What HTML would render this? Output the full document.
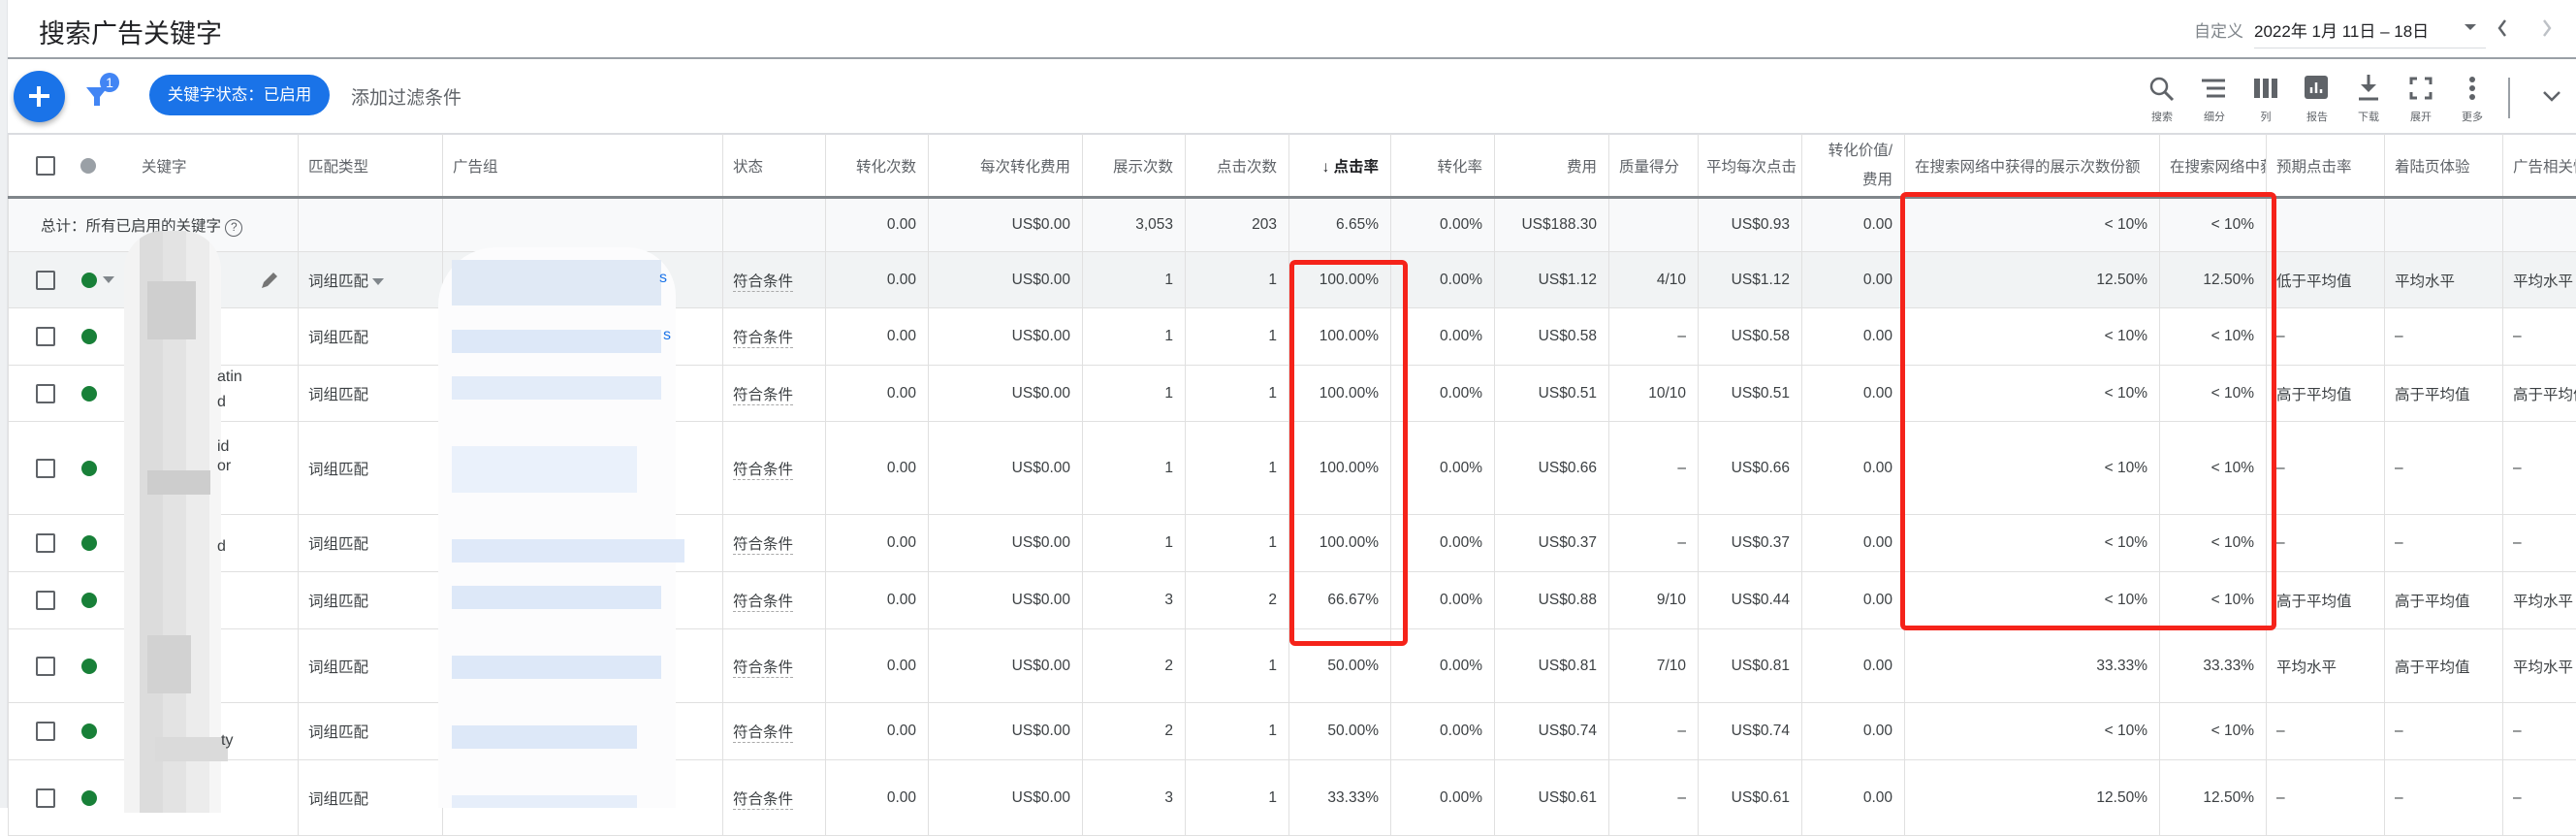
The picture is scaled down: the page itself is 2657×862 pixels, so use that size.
<!DOCTYPE html>
<html><head><meta charset="utf-8"><style>
*{box-sizing:border-box;margin:0;padding:0}
body{width:2657px;height:833px;overflow:hidden;background:#fff;font-family:"Liberation Sans","Noto Sans CJK SC",sans-serif;color:#3c4043;position:relative}
.abs{position:absolute}
#strip{left:0;top:0;width:8px;height:833px;background:#eef0f2;border-right:1px solid #e3e5e8}
#top{left:8px;top:0;width:2649px;height:61px;border-bottom:2px solid #9aa0a6;background:#fff}
table{position:absolute;left:8px;top:138px;border-collapse:collapse;table-layout:fixed;width:2649px}
td,th{border:1px solid #e0e0e0;white-space:nowrap;overflow:hidden;font-weight:normal;font-size:15.5px;padding:0 12px;text-align:right;vertical-align:middle}
th{color:#5f6368;height:65px;font-size:15.5px;border-top:1px solid #dadce0}
thead tr{border-bottom:3px solid #80868b}
td.l,th.l{text-align:left;padding-left:10px}
tr.tot td{background:#f8f9fa}
tr.hov td{background:#f1f3f4}
.st{border-bottom:1px dashed #aaa;padding-bottom:1px}
.red{position:absolute;border:5px solid #f5231a;border-radius:6px}
.cb{display:inline-block;width:20px;height:20px;border:2px solid #5f6368;border-radius:2px;vertical-align:middle}
.dot{display:inline-block;width:16px;height:16px;border-radius:50%;background:#188038;vertical-align:middle}
.tb{position:absolute;text-align:center;color:#5f6368;font-size:11px;width:40px}
</style></head><body>
<div class="abs" id="strip"></div>
<div class="abs" id="top"></div>
<div class="abs" style="left:40px;top:13px;font-size:27px;color:#202124">搜索广告关键字</div>
<div class="abs" style="left:2263px;top:18px;font-size:17px;color:#80868b">自定义</div>
<div class="abs" style="left:2325px;top:18px;font-size:17px;color:#202124">2022年 1月 11日 – 18日</div>
<div class="abs" style="left:2325px;top:49px;width:239px;height:1px;background:#dadce0"></div>
<div class="abs" style="left:2542px;top:25px;border-left:6px solid transparent;border-right:6px solid transparent;border-top:6px solid #5f6368"></div>
<svg class="abs" style="left:2574px;top:18px" width="14" height="22"><path d="M10 3 L4 11 L10 19" stroke="#5f6368" stroke-width="2.4" fill="none"/></svg>
<svg class="abs" style="left:2620px;top:18px" width="14" height="22"><path d="M4 3 L10 11 L4 19" stroke="#bdc1c6" stroke-width="2.4" fill="none"/></svg>

<div class="abs" style="left:14px;top:73px;width:53px;height:53px;border-radius:50%;background:#1a73e8;box-shadow:0 3px 6px rgba(0,0,0,.3)"></div>
<div class="abs" style="left:30px;top:97px;width:21px;height:4px;background:#fff"></div>
<div class="abs" style="left:38px;top:89px;width:4px;height:21px;background:#fff"></div>
<svg class="abs" style="left:86px;top:74px" width="40" height="40"><path d="M3 16 H25 L17 26 V35 H11 V26 Z" fill="#4285f4"/><circle cx="27" cy="11" r="10" fill="#4285f4"/><text x="27" y="16" font-size="14" fill="#fff" text-anchor="middle" font-family="Liberation Sans">1</text></svg>
<div class="abs" style="left:154px;top:77px;width:186px;height:42px;border-radius:21px;background:#1a73e8;color:#fff;font-size:16.5px;line-height:42px;text-align:center">关键字状态：已启用</div>
<div class="abs" style="left:362px;top:86px;font-size:19px;color:#5f6368">添加过滤条件</div>

<svg class="abs" style="left:2216px;top:78px" width="28" height="28"><circle cx="11" cy="11" r="8" stroke="#5f6368" stroke-width="2.5" fill="none"/><path d="M17 17 L25 25" stroke="#5f6368" stroke-width="3"/></svg>
<svg class="abs" style="left:2270px;top:80px" width="28" height="24"><path d="M1 3H25M6 11H25M6 19H25" stroke="#5f6368" stroke-width="3"/></svg>
<svg class="abs" style="left:2324px;top:80px" width="28" height="24"><rect x="1" y="1" width="6" height="20" fill="#5f6368"/><rect x="10" y="1" width="6" height="20" fill="#5f6368"/><rect x="19" y="1" width="6" height="20" fill="#5f6368"/></svg>
<svg class="abs" style="left:2377px;top:78px" width="26" height="26"><rect x="0" y="0" width="24" height="24" rx="3" fill="#5f6368"/><path d="M7 18V12M12 18V7M17 18V14" stroke="#fff" stroke-width="2.5"/></svg>
<svg class="abs" style="left:2431px;top:76px" width="26" height="30"><path d="M12 1V17" stroke="#5f6368" stroke-width="3"/><path d="M4 11L12 19L20 11Z" fill="#5f6368"/><path d="M2 26H22" stroke="#5f6368" stroke-width="3"/></svg>
<svg class="abs" style="left:2485px;top:79px" width="24" height="24"><path d="M2 8V2H8M16 2H22V8M22 16V22H16M8 22H2V16" stroke="#5f6368" stroke-width="3" fill="none"/></svg>
<svg class="abs" style="left:2544px;top:78px" width="12" height="28"><circle cx="6" cy="4" r="3" fill="#5f6368"/><circle cx="6" cy="13" r="3" fill="#5f6368"/><circle cx="6" cy="22" r="3" fill="#5f6368"/></svg>
<div class="tb" style="left:2210px;top:112px">搜索</div>
<div class="tb" style="left:2264px;top:112px">细分</div>
<div class="tb" style="left:2317px;top:112px">列</div>
<div class="tb" style="left:2370px;top:112px">报告</div>
<div class="tb" style="left:2423px;top:112px">下载</div>
<div class="tb" style="left:2477px;top:112px">展开</div>
<div class="tb" style="left:2530px;top:112px">更多</div>
<div class="abs" style="left:2587px;top:80px;width:2px;height:42px;background:#9aa0a6"></div>
<svg class="abs" style="left:2622px;top:93px" width="20" height="14"><path d="M2 2L10 10L18 2" stroke="#5f6368" stroke-width="2.5" fill="none"/></svg>
<div class="abs" style="left:8px;top:137px;width:2649px;height:1px;background:#dadce0"></div>

<table>
<colgroup><col style="width:299px"><col style="width:149px"><col style="width:289px"><col style="width:106px"><col style="width:106px"><col style="width:159px"><col style="width:106px"><col style="width:107px"><col style="width:105px"><col style="width:107px"><col style="width:118px"><col style="width:92px"><col style="width:107px"><col style="width:106px"><col style="width:263px"><col style="width:110px"><col style="width:122px"><col style="width:122px"><col style="width:76px"></colgroup>
<thead><tr>
<th class="l" style="padding-left:28px"><span class="cb" style="border-color:#5f6368"></span><span class="dot" style="background:#9aa0a6;margin-left:26px"></span><span style="margin-left:47px;vertical-align:middle">关键字</span></th>
<th class="l">匹配类型</th><th class="l">广告组</th><th class="l">状态</th><th>转化次数</th><th>每次转化费用</th><th>展示次数</th><th>点击次数</th><th style="color:#202124;font-weight:bold">↓ 点击率</th><th>转化率</th><th>费用</th><th class="l">质量得分</th><th class="l" style="padding-left:8px">平均每次点击</th><th style="line-height:30px">转化价值/<br>费用</th><th class="l">在搜索网络中获得的展示次数份额</th><th class="l">在搜索网络中获得的</th><th class="l">预期点击率</th><th class="l">着陆页体验</th><th class="l">广告相关性</th>
</tr></thead>
<tbody>
<tr class="tot" style="height:56px"><td class="l" style="padding-left:33px">总计：所有已启用的关键字 <span style="display:inline-block;width:18px;height:18px;border:1.5px solid #5f6368;border-radius:50%;font-size:12px;text-align:center;line-height:15px;color:#5f6368">?</span></td><td></td><td></td><td></td><td>0.00</td><td>US$0.00</td><td>3,053</td><td>203</td><td>6.65%</td><td>0.00%</td><td>US$188.30</td><td></td><td>US$0.93</td><td>0.00</td><td>&lt; 10%</td><td>&lt; 10%</td><td></td><td></td><td></td></tr>
<tr class="hov" style="height:58px"><td class="l" style="padding-left:28px"><span class="cb"></span><span class="dot" style="margin-left:27px"></span><span style="display:inline-block;margin-left:6px;border-left:6px solid transparent;border-right:6px solid transparent;border-top:7px solid #80868b;vertical-align:middle"></span><svg style="margin-left:150px;vertical-align:middle" width="20" height="20"><path d="M2 18L4 12L14 2L18 6L8 16Z" fill="#757575"/></svg></td><td class="l">词组匹配 <span style="display:inline-block;border-left:6px solid transparent;border-right:6px solid transparent;border-top:7px solid #80868b;vertical-align:middle"></span></td><td></td><td class="l"><span class="st">符合条件</span></td><td>0.00</td><td>US$0.00</td><td>1</td><td>1</td><td>100.00%</td><td>0.00%</td><td>US$1.12</td><td>4/10</td><td>US$1.12</td><td>0.00</td><td>12.50%</td><td>12.50%</td><td class="l">低于平均值</td><td class="l">平均水平</td><td class="l">平均水平</td></tr>
<tr style="height:59px"><td class="l" style="padding-left:28px"><span class="cb"></span><span class="dot" style="margin-left:27px"></span></td><td class="l">词组匹配</td><td></td><td class="l"><span class="st">符合条件</span></td><td>0.00</td><td>US$0.00</td><td>1</td><td>1</td><td>100.00%</td><td>0.00%</td><td>US$0.58</td><td>–</td><td>US$0.58</td><td>0.00</td><td>&lt; 10%</td><td>&lt; 10%</td><td class="l">–</td><td class="l">–</td><td class="l">–</td></tr>
<tr style="height:58px"><td class="l" style="padding-left:28px"><span class="cb"></span><span class="dot" style="margin-left:27px"></span></td><td class="l">词组匹配</td><td></td><td class="l"><span class="st">符合条件</span></td><td>0.00</td><td>US$0.00</td><td>1</td><td>1</td><td>100.00%</td><td>0.00%</td><td>US$0.51</td><td>10/10</td><td>US$0.51</td><td>0.00</td><td>&lt; 10%</td><td>&lt; 10%</td><td class="l">高于平均值</td><td class="l">高于平均值</td><td class="l">高于平均值</td></tr>
<tr style="height:96px"><td class="l" style="padding-left:28px"><span class="cb"></span><span class="dot" style="margin-left:27px"></span></td><td class="l">词组匹配</td><td></td><td class="l"><span class="st">符合条件</span></td><td>0.00</td><td>US$0.00</td><td>1</td><td>1</td><td>100.00%</td><td>0.00%</td><td>US$0.66</td><td>–</td><td>US$0.66</td><td>0.00</td><td>&lt; 10%</td><td>&lt; 10%</td><td class="l">–</td><td class="l">–</td><td class="l">–</td></tr>
<tr style="height:59px"><td class="l" style="padding-left:28px"><span class="cb"></span><span class="dot" style="margin-left:27px"></span></td><td class="l">词组匹配</td><td></td><td class="l"><span class="st">符合条件</span></td><td>0.00</td><td>US$0.00</td><td>1</td><td>1</td><td>100.00%</td><td>0.00%</td><td>US$0.37</td><td>–</td><td>US$0.37</td><td>0.00</td><td>&lt; 10%</td><td>&lt; 10%</td><td class="l">–</td><td class="l">–</td><td class="l">–</td></tr>
<tr style="height:59px"><td class="l" style="padding-left:28px"><span class="cb"></span><span class="dot" style="margin-left:27px"></span></td><td class="l">词组匹配</td><td></td><td class="l"><span class="st">符合条件</span></td><td>0.00</td><td>US$0.00</td><td>3</td><td>2</td><td>66.67%</td><td>0.00%</td><td>US$0.88</td><td>9/10</td><td>US$0.44</td><td>0.00</td><td>&lt; 10%</td><td>&lt; 10%</td><td class="l">高于平均值</td><td class="l">高于平均值</td><td class="l">平均水平</td></tr>
<tr style="height:76px"><td class="l" style="padding-left:28px"><span class="cb"></span><span class="dot" style="margin-left:27px"></span></td><td class="l">词组匹配</td><td></td><td class="l"><span class="st">符合条件</span></td><td>0.00</td><td>US$0.00</td><td>2</td><td>1</td><td>50.00%</td><td>0.00%</td><td>US$0.81</td><td>7/10</td><td>US$0.81</td><td>0.00</td><td>33.33%</td><td>33.33%</td><td class="l">平均水平</td><td class="l">高于平均值</td><td class="l">平均水平</td></tr>
<tr style="height:59px"><td class="l" style="padding-left:28px"><span class="cb"></span><span class="dot" style="margin-left:27px"></span></td><td class="l">词组匹配</td><td></td><td class="l"><span class="st">符合条件</span></td><td>0.00</td><td>US$0.00</td><td>2</td><td>1</td><td>50.00%</td><td>0.00%</td><td>US$0.74</td><td>–</td><td>US$0.74</td><td>0.00</td><td>&lt; 10%</td><td>&lt; 10%</td><td class="l">–</td><td class="l">–</td><td class="l">–</td></tr>
<tr style="height:78px"><td class="l" style="padding-left:28px"><span class="cb"></span><span class="dot" style="margin-left:27px"></span></td><td class="l">词组匹配</td><td></td><td class="l"><span class="st">符合条件</span></td><td>0.00</td><td>US$0.00</td><td>3</td><td>1</td><td>33.33%</td><td>0.00%</td><td>US$0.61</td><td>–</td><td>US$0.61</td><td>0.00</td><td>12.50%</td><td>12.50%</td><td class="l">–</td><td class="l">–</td><td class="l">–</td></tr>
</tbody></table>

<!-- keyword blur -->
<div class="abs" style="left:128px;top:238px;width:100px;height:600px;border-radius:40px 40px 0 0;background:linear-gradient(90deg,#f3f3f3 0 16%,#dcdcdc 16% 40%,#e3e3e3 40% 64%,#ececec 64% 88%,#f6f6f6 88%)"></div>
<div class="abs" style="left:152px;top:290px;width:50px;height:60px;background:#cfcfcf"></div>
<div class="abs" style="left:152px;top:485px;width:65px;height:25px;background:#cdcdcd"></div>
<div class="abs" style="left:152px;top:655px;width:45px;height:60px;background:#d2d2d2"></div>
<div class="abs" style="left:160px;top:760px;width:75px;height:25px;background:#dadada"></div>
<div class="abs" style="left:224px;top:380px;font-size:16px">atin</div>
<div class="abs" style="left:224px;top:406px;font-size:16px">d</div>
<div class="abs" style="left:224px;top:452px;font-size:16px">id</div>
<div class="abs" style="left:224px;top:472px;font-size:16px">or</div>
<div class="abs" style="left:224px;top:555px;font-size:16px">d</div>
<div class="abs" style="left:228px;top:755px;font-size:16px">ty</div>
<!-- ad group blur -->
<div class="abs" style="left:452px;top:255px;width:245px;height:578px;background:#fcfcfd;border-radius:60px 50px 0 0"></div>
<div class="abs" style="left:466px;top:268px;width:216px;height:47px;background:#e0e9f5"></div>
<div class="abs" style="left:466px;top:340px;width:216px;height:24px;background:#dde8f8"></div>
<div class="abs" style="left:466px;top:388px;width:216px;height:24px;background:#e3ecf9"></div>
<div class="abs" style="left:466px;top:460px;width:191px;height:48px;background:#eaf1fb"></div>
<div class="abs" style="left:466px;top:556px;width:240px;height:24px;background:#dfe9f9"></div>
<div class="abs" style="left:466px;top:604px;width:216px;height:24px;background:#dde8f8"></div>
<div class="abs" style="left:466px;top:676px;width:216px;height:24px;background:#dde8f8"></div>
<div class="abs" style="left:466px;top:748px;width:191px;height:24px;background:#dde8f8"></div>
<div class="abs" style="left:466px;top:820px;width:191px;height:13px;background:#e6eefa"></div>
<div class="abs" style="left:680px;top:278px;font-size:16px;color:#1a73e8">s</div>
<div class="abs" style="left:684px;top:337px;font-size:16px;color:#1a73e8">s</div>

<div class="red" style="left:1330px;top:268px;width:122px;height:398px"></div>
<div class="red" style="left:1960px;top:198px;width:388px;height:452px"></div>
</body></html>
